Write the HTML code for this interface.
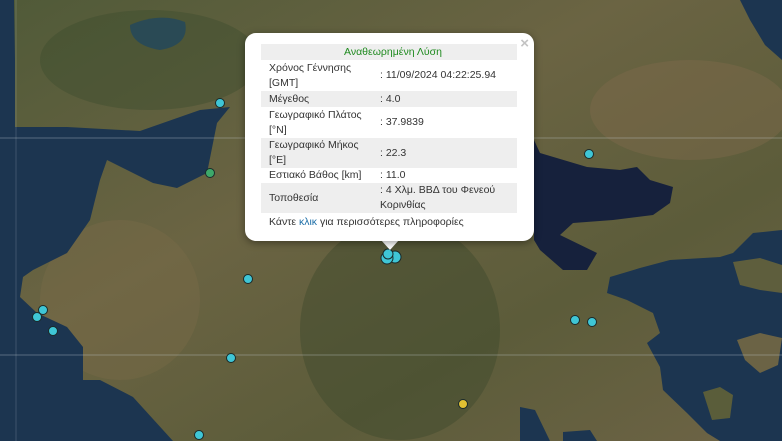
<!DOCTYPE html>
<html><head><meta charset="utf-8"><style>
html,body{margin:0;padding:0;width:782px;height:441px;overflow:hidden;font-family:"Liberation Sans",Arial,sans-serif}
#map{position:absolute;left:0;top:0}
.pop{position:absolute;left:245px;top:33px;width:289px;height:208px;background:#fff;border-radius:11px;box-shadow:0 2px 8px rgba(0,0,0,.4)}
.tip{position:absolute;left:381px;top:240px;width:0;height:0;border-left:9px solid transparent;border-right:9px solid transparent;border-top:10px solid #fff}
.x{position:absolute;right:5px;top:2px;color:#c3c3c3;font-size:15px;font-weight:bold}
table{position:absolute;left:16px;top:11px;width:256px;border-collapse:collapse;font-size:10.5px;color:#333}
td{padding:0 0 0 8px;vertical-align:middle;line-height:15px}
tr.g td{background:#eeeeee}
.hd td{text-align:center;color:#1f8a1f;height:16px}
.ft{position:absolute;left:24px;top:183px;font-size:10.5px;color:#333}
.ft span{color:#1e6fa8}
</style></head><body>
<svg id="map" width="782" height="441" viewBox="0 0 782 441">
<defs>
<linearGradient id="land" x1="0" y1="0" x2="1" y2="1">
<stop offset="0" stop-color="#505a38"/><stop offset=".4" stop-color="#6b6443"/><stop offset=".7" stop-color="#5c5c3a"/><stop offset="1" stop-color="#6e6446"/></linearGradient>
</defs>
<rect width="782" height="441" fill="url(#land)"/>
<ellipse cx="400" cy="330" rx="100" ry="110" fill="#3f4a2c" opacity=".45"/>
<ellipse cx="150" cy="60" rx="110" ry="50" fill="#3e4d2e" opacity=".45"/>
<ellipse cx="690" cy="110" rx="100" ry="50" fill="#7e6b4c" opacity=".45"/>
<ellipse cx="120" cy="300" rx="80" ry="80" fill="#7a6c48" opacity=".4"/>
<path d="M0 0 L14 0 L15 60 L15 127 L67 127 L140 131 L200 110 L230 107 L217 123 L207 173 L177 188 L153 183 L107 160 L100 180 L90 220 L67 253 L33 270 L23 277 L20 297 L37 313 L67 327 L83 347 L83 380 L100 380 L133 397 L173 441 L0 441Z" fill="#1c3550"/>
<path d="M130 25 Q160 12 185 22 Q190 45 160 50 Q130 45 130 25Z" fill="#2a4a55"/>
<path d="M534 140 L540 153 L587 167 L620 170 L637 167 L650 180 L673 187 L670 203 L653 215 L613 220 L573 223 L560 235 L597 253 L587 270 L563 270 L540 250 L534 240Z" fill="#16213c"/>
<path d="M610 277 L607 293 L627 300 L653 313 L660 333 L647 343 L660 367 L663 390 L687 413 L707 433 L720 441 L782 441 L782 230 L753 233 L733 253 L720 257 L670 260 L640 268Z" fill="#1c3550"/>
<path d="M733 262 L760 258 L782 265 L782 293 L760 290 L740 285Z" fill="#5e5e3d"/>
<path d="M737 340 L760 333 L782 338 L778 365 L760 373 L745 360Z" fill="#6b6345"/>
<path d="M703 392 L720 387 L733 395 L730 418 L712 420Z" fill="#5a5d3a"/>
<path d="M520 407 L535 410 L550 441 L520 441Z" fill="#1c3550"/>
<path d="M563 432 L590 430 L597 441 L563 441Z" fill="#1c3550"/>
<path d="M740 0 L782 0 L782 60 L765 45 L750 20Z" fill="#1c3550"/>
<line x1="0" y1="138" x2="782" y2="138" stroke="#c9d0d6" stroke-opacity=".35"/>
<line x1="0" y1="355" x2="782" y2="355" stroke="#c9d0d6" stroke-opacity=".35"/>
<line x1="16" y1="0" x2="16" y2="441" stroke="#c9d0d6" stroke-opacity=".2"/>
<g stroke="#1a2a2a" stroke-width="1">
<circle cx="220" cy="103" r="4.5" fill="#3fc6d6"/>
<circle cx="210" cy="173" r="4.5" fill="#3da86a"/>
<circle cx="589" cy="154" r="4.5" fill="#3fc6d6"/>
<circle cx="248" cy="279" r="4.5" fill="#3fc6d6"/>
<circle cx="43" cy="310" r="4.5" fill="#3fc6d6"/>
<circle cx="37" cy="317" r="4.5" fill="#3fc6d6"/>
<circle cx="53" cy="331" r="4.5" fill="#3fc6d6"/>
<circle cx="231" cy="358" r="4.5" fill="#3fc6d6"/>
<circle cx="575" cy="320" r="4.5" fill="#3fc6d6"/>
<circle cx="592" cy="322" r="4.5" fill="#3fc6d6"/>
<circle cx="199" cy="435" r="4.5" fill="#3fc6d6"/>
<circle cx="463" cy="404" r="4.5" fill="#e0c032"/>
<circle cx="395" cy="257" r="6" fill="#3fc6d6"/>
<circle cx="387" cy="258" r="6" fill="#3fc6d6"/>
<circle cx="388" cy="254" r="5" fill="#3fc6d6"/>
</g>
</svg>
<div class="tip"></div>
<div class="pop">
<div class="x">×</div>
<table>
<tr class="g hd"><td colspan="2">Αναθεωρημένη Λύση</td></tr>
<tr style="height:31px"><td style="width:103px">Χρόνος Γέννησης<br>[GMT]</td><td>: 11/09/2024 04:22:25.94</td></tr>
<tr class="g" style="height:16px"><td>Μέγεθος</td><td>: 4.0</td></tr>
<tr style="height:31px"><td>Γεωγραφικό Πλάτος<br>[°N]</td><td>: 37.9839</td></tr>
<tr class="g" style="height:30px"><td>Γεωγραφικό Μήκος<br>[°E]</td><td>: 22.3</td></tr>
<tr style="height:15px"><td>Εστιακό Βάθος [km]</td><td>: 11.0</td></tr>
<tr class="g" style="height:30px"><td>Τοποθεσία</td><td>: 4 Χλμ. ΒΒΔ του Φενεού<br>Κορινθίας</td></tr>
</table>
<div class="ft">Κάντε <span>κλικ</span> για περισσότερες πληροφορίες</div>
</div>
</body></html>
